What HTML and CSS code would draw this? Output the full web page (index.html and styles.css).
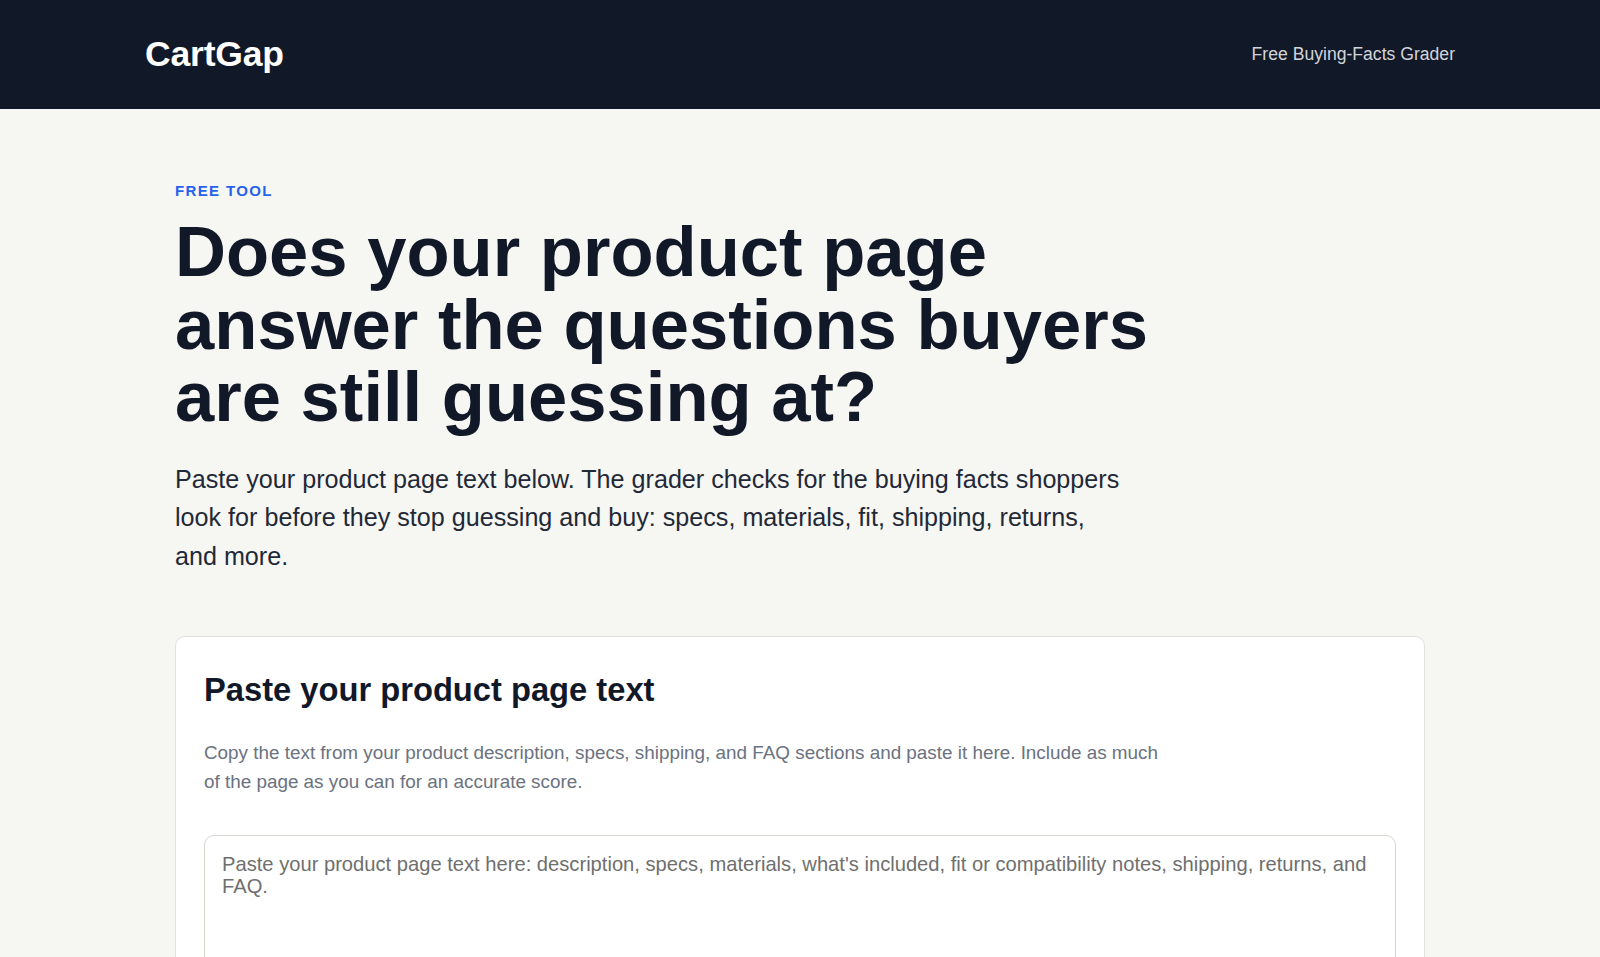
FILE: index.html
```html
<!DOCTYPE html>
<html lang="en">
<head>
<meta charset="utf-8">
<title>CartGap — Free Buying-Facts Grader</title>
<link rel="stylesheet" href="styles.css">
</head>
<body>
<header class="site-header">
  <div class="header-inner">
    <a class="logo" href="#">CartGap</a>
    <nav class="nav"><a href="#">Free Buying-Facts Grader</a></nav>
  </div>
</header>
<main class="main">
  <section class="hero">
    <p class="eyebrow">FREE TOOL</p>
    <h1 class="title">Does your product page answer the questions buyers are still guessing at?</h1>
    <p class="lede">Paste your product page text below. The grader checks for the buying facts shoppers look for before they stop guessing and buy: specs, materials, fit, shipping, returns, and more.</p>
  </section>
  <section class="card">
    <h2 class="card-title">Paste your product page text</h2>
    <p class="card-desc">Copy the text from your product description, specs, shipping, and FAQ sections and paste it here. Include as much of the page as you can for an accurate score.</p>
    <textarea class="input" placeholder="Paste your product page text here: description, specs, materials, what's included, fit or compatibility notes, shipping, returns, and FAQ."></textarea>
  </section>
</main>
</body>
</html>
```

FILE: styles.css
```css
* { box-sizing: border-box; }

html, body {
  margin: 0;
  padding: 0;
}

body {
  background: #f6f6f3;
  color: #111827;
  font-family: "Liberation Sans", Arial, Helvetica, sans-serif;
  line-height: 1.5;
}

a { color: inherit; text-decoration: none; }

.site-header {
  background: #111827;
  height: 109px;
}

.header-inner {
  max-width: 1310px;
  height: 100%;
  margin: 0 auto;
  display: flex;
  align-items: center;
  justify-content: space-between;
}

.logo {
  color: #ffffff;
  font-weight: 700;
  font-size: 35.5px;
  line-height: 1;
  letter-spacing: -0.005em;
}

.nav {
  color: #d1d5db;
  font-size: 17.6px;
  line-height: 1;
}

.main {
  max-width: 1282px;
  margin: 0 auto;
  padding: 73px 16px 0;
}

.eyebrow {
  margin: 0 0 16px;
  color: #2563eb;
  font-size: 15px;
  font-weight: 700;
  letter-spacing: 0.09em;
  line-height: 18px;
}

.title {
  margin: 0;
  max-width: 1000px;
  font-size: 70.6px;
  line-height: 72.5px;
  font-weight: 700;
  color: #111827;
}

.lede {
  margin: 26px 0 0;
  max-width: 952px;
  font-size: 25.15px;
  line-height: 38.8px;
  color: #1f2937;
}

.card {
  margin-top: 60px;
  background: #ffffff;
  border: 1px solid #e2e2dd;
  border-radius: 10px;
  padding: 28px;
}

.card-title {
  margin: 0;
  font-size: 32.7px;
  line-height: 1.5;
  font-weight: 700;
  color: #111827;
}

.card-desc {
  margin: 24px 0 0;
  max-width: 965px;
  font-size: 18.86px;
  line-height: 29px;
  color: #6b7280;
}

.input {
  display: block;
  width: 100%;
  min-height: 240px;
  margin-top: 39px;
  padding: 18px 17px;
  border: 1px solid #d6d6d1;
  border-radius: 10px;
  background: #ffffff;
  font-family: "Liberation Sans", Arial, Helvetica, sans-serif;
  font-size: 20.17px;
  line-height: 21.8px;
  color: #111827;
  resize: vertical;
}

.input::placeholder {
  color: #6f6f6f;
  opacity: 1;
}
```
